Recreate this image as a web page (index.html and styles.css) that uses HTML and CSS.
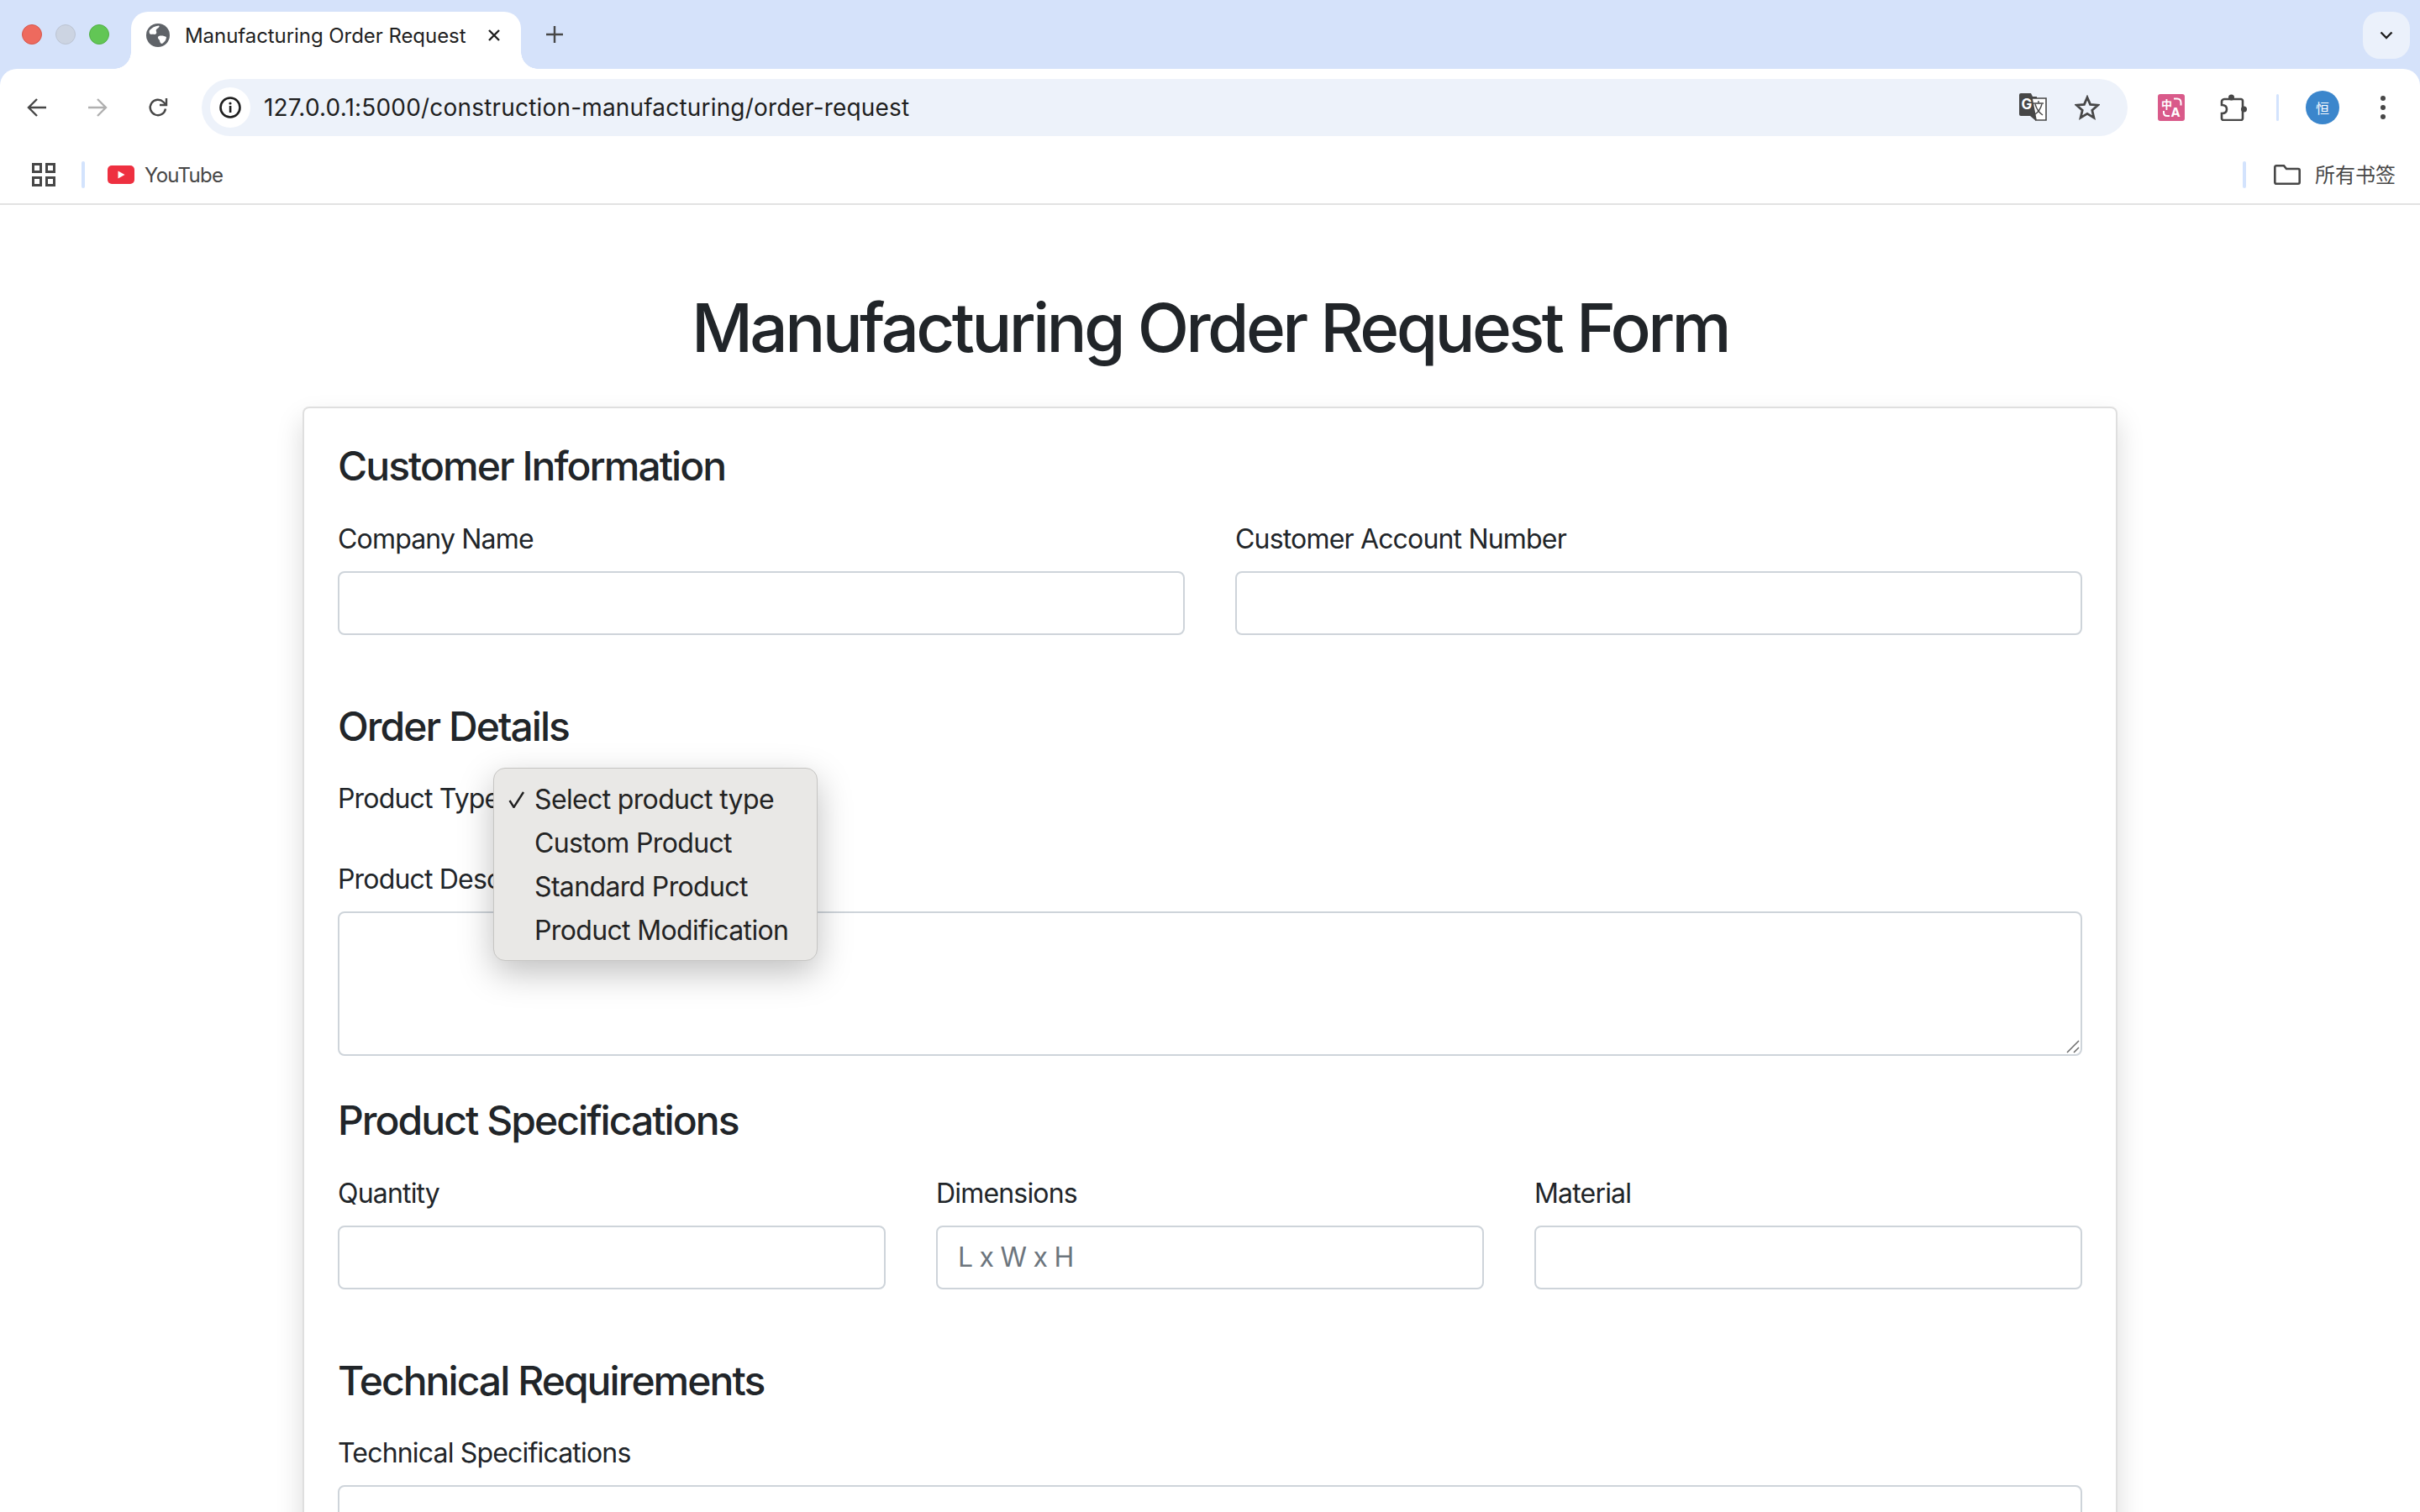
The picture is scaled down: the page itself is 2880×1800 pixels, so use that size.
FILE: index.html
```html
<!DOCTYPE html>
<html lang="en">
<head>
<meta charset="utf-8">
<title>Manufacturing Order Request</title>
<link rel="stylesheet" href="styles.css">
</head>
<body>
<header class="chrome">
  <div class="tabstrip">
    <div class="lights"><span class="light red"></span><span class="light grey"></span><span class="light green"></span></div>
    <div class="tab">
      <svg class="favicon" viewBox="0 0 28 28"><circle cx="14" cy="14" r="14" fill="#5f6368"/><path d="M4 8c3-3 6-5 11-5.500 2 1-1 3-3 4.500-1 2 1 3 0 5-2 2-4 0-6 1C4 13 3 10 4 8zM15 15c3-1 7 0 9 1 0 3-2 6-5 8-2 0-3-2-3-4-2-2-3-4-1-5z" fill="#fff"/></svg>
      <span class="tab-title">Manufacturing Order Request</span>
      <svg class="tab-close" viewBox="0 0 16 16"><path d="M2 2l12 12M14 2L2 14" stroke="#1f1f1f" stroke-width="2.400" fill="none"/></svg>
    </div>
    <svg class="newtab" viewBox="0 0 20 20"><path d="M10 0v20M0 10h20" stroke="#474747" stroke-width="2.400" fill="none"/></svg>
    <div class="tabsearch"><svg viewBox="0 0 16 10" class="chev"><path d="M1.500 1.500L8 8l6.500-6.500" stroke="#1f1f1f" stroke-width="2.400" fill="none"/></svg></div>
  </div>
  <div class="toolbar">
    <div class="navbtn"><svg viewBox="0 0 24 22" class="navicon"><path d="M23 11H2M12 1L2 11l10 10" stroke="#474747" stroke-width="2.400" fill="none"/></svg></div>
    <div class="navbtn"><svg viewBox="0 0 24 22" class="navicon"><path d="M1 11h21M12 1l10 10-10 10" stroke="#b0b0b0" stroke-width="2.400" fill="none"/></svg></div>
    <div class="navbtn"><svg viewBox="0 0 24 24" class="navicon"><path d="M21 13.500A9.200 9.200 0 1 1 18.500 5.500L21 8" stroke="#474747" stroke-width="2.400" fill="none"/><path d="M22 1v8h-8" stroke="#474747" stroke-width="2.400" fill="none"/></svg></div>
    <div class="omnibox">
      <div class="siteinfo"><svg viewBox="0 0 26 26" class="infoicon"><circle cx="13" cy="13" r="11.500" fill="none" stroke="#1f1f1f" stroke-width="2.600"/><rect x="11.800" y="11" width="2.600" height="8" fill="#1f1f1f"/><circle cx="13" cy="8" r="1.600" fill="#1f1f1f"/></svg></div>
      <span class="url">127.0.0.1:5000/construction-manufacturing/order-request</span>
      <svg viewBox="0 0 33 34" class="gt"><path d="M2 0h12l2 4h5v23h-1v6l-7-6H2a2 2 0 0 1-2-2V2a2 2 0 0 1 2-2z" fill="#474747"/><text x="2.500" y="19" class="gt-g">G</text><path d="M15 6h17v26H20z" fill="#fff" stroke="#474747" stroke-width="1.600"/><path d="M17 12h12M23 9v3M19 13c2 7 6 11 9 13M27 13c-2 7-5 10-8 12" stroke="#474747" stroke-width="1.400" fill="none"/></svg>
      <svg viewBox="0 0 30 30" class="star"><path d="M15 3l3.600 8.400 9.100.8-6.900 6 2.100 8.900L15 22.400 7.100 27.100l2.100-8.900-6.900-6 9.100-.8z" fill="none" stroke="#474747" stroke-width="2.800"/></svg>
    </div>
    <svg viewBox="0 0 32 32" class="ext-pink"><rect width="32" height="32" rx="3" fill="#d95a8a"/><text x="4" y="17" class="ext-zh">中</text><text x="15.500" y="26.500" class="ext-a">A</text><path d="M19 5.500h4c3 0 4.500 2 4.500 5v3M7 20v2c0 2.500 1.500 4 4 4h3" fill="none" stroke="#fff" stroke-width="2"/></svg>
    <svg viewBox="0 0 32 32" class="puzzle"><path d="M5 6h20c1 0 2 1 2 2v21c0 1-1 2-2 2H4c-1 0-2-1-2-2v-6c4 0 6-2 6-5s-2-5-6-5V9c0-1 1-3 3-3z" fill="none" stroke="#474747" stroke-width="2.600"/><circle cx="13.500" cy="4" r="3.500" fill="#474747"/><circle cx="28.500" cy="18" r="3.500" fill="#474747"/></svg>
    <span class="tsep"></span>
    <div class="avatar">恒</div>
    <svg viewBox="0 0 24 30" class="dots"><circle cx="12" cy="4" r="3" fill="#474747"/><circle cx="12" cy="15" r="3" fill="#474747"/><circle cx="12" cy="26" r="3" fill="#474747"/></svg>
  </div>
  <div class="bookmarks">
    <svg viewBox="0 0 28 28" class="apps"><path d="M1.500 1.500h9v9h-9zM17.500 1.500h9v9h-9zM1.500 17.500h9v9h-9zM17.500 17.500h9v9h-9z" fill="none" stroke="#474747" stroke-width="3"/></svg>
    <span class="bsep"></span>
    <svg viewBox="0 0 32 22" class="yt"><rect width="32" height="22" rx="5" fill="#ee3040"/><path d="M12.500 6.500l8 4.500-8 4.500z" fill="#fff"/></svg>
    <span class="yt-label">YouTube</span>
    <span class="bsep bsep-right"></span>
    <svg viewBox="0 0 32 24" class="folder"><path d="M1.300 3c0-1 .8-1.700 1.700-1.700h9l3 3.700h14c1 0 1.700.7 1.700 1.700V21c0 1-.7 1.700-1.700 1.700H3c-1 0-1.700-.7-1.700-1.700z" fill="none" stroke="#474747" stroke-width="2.600"/></svg>
    <span class="all-label">所有书签</span>
  </div>
</header>

<main class="page">
  <h1 class="title">Manufacturing Order Request Form</h1>
  <form class="card">
    <section class="section">
      <h4 class="heading">Customer Information</h4>
      <div class="row row-2">
        <div class="field"><label class="label">Company Name</label><input class="control" type="text"></div>
        <div class="field"><label class="label">Customer Account Number</label><input class="control" type="text"></div>
      </div>
    </section>
    <section class="section section-tight">
      <h4 class="heading">Order Details</h4>
      <div class="field field-select">
        <label class="label">Product Type</label>
        <div class="popup">
          <div class="opt"><svg viewBox="0 0 20 20" class="check"><path d="M1.500 11l5 8L18 1" fill="none" stroke="#212121" stroke-width="2.400"/></svg><span>Select product type</span></div>
          <div class="opt"><span class="nocheck"></span><span>Custom Product</span></div>
          <div class="opt"><span class="nocheck"></span><span>Standard Product</span></div>
          <div class="opt"><span class="nocheck"></span><span>Product Modification</span></div>
        </div>
      </div>
      <div class="field field-last">
        <label class="label">Product Description</label>
        <div class="area-wrap">
          <textarea class="control area"></textarea>
          <svg viewBox="0 0 16 16" class="grip"><path d="M1 15L15 1M9 15l6-6" stroke="#6b6b6b" stroke-width="1.500" fill="none"/></svg>
        </div>
      </div>
    </section>
    <section class="section">
      <h4 class="heading">Product Specifications</h4>
      <div class="row row-3">
        <div class="field"><label class="label">Quantity</label><input class="control" type="text"></div>
        <div class="field"><label class="label">Dimensions</label><input class="control" type="text" placeholder="L x W x H"></div>
        <div class="field"><label class="label">Material</label><input class="control" type="text"></div>
      </div>
    </section>
    <section class="section">
      <h4 class="heading">Technical Requirements</h4>
      <div class="field"><label class="label">Technical Specifications</label><textarea class="control area"></textarea></div>
    </section>
  </form>
</main>
</body>
</html>
```
FILE: styles.css
```css
* { box-sizing: border-box; }
html, body { margin: 0; height: 1800px; overflow: hidden; background: #fff; }
body { font-family: Inter, "Noto Sans CJK SC", sans-serif; color: #212529; }

.chrome { background: #d5e2fa; }
.tabstrip { height: 82px; display: flex; align-items: flex-start; padding-left: 26px; }
.lights { display: flex; gap: 16px; margin-top: 29px; }
.light { width: 24px; height: 24px; border-radius: 50%; }
.red { background: #ee6a5e; border: 1px solid #d5574c; }
.grey { background: #ccd4e2; border: 1px solid #bcc4d2; }
.green { background: #62c655; border: 1px solid #52b045; }

.tab { position: relative; margin-left: 26px; margin-top: 14px; width: 464px; height: 68px; background: #fff; border-radius: 20px 20px 0 0; display: flex; align-items: center; padding: 0 0 12px 18px; }
.tab::before, .tab::after { content: ""; position: absolute; bottom: 0; width: 20px; height: 20px; }
.tab::before { left: -20px; background: radial-gradient(circle at 0 0, transparent 19.500px, #fff 20px); }
.tab::after { right: -20px; background: radial-gradient(circle at 100% 0, transparent 19.500px, #fff 20px); }
.favicon { width: 28px; height: 28px; flex: none; }
.tab-title { margin-left: 18px; font-size: 24px; letter-spacing: -.06px; color: #1f1f1f; white-space: nowrap; width: 340px; }
.tab-close { width: 16px; height: 16px; margin-left: 20px; }
.newtab { width: 20px; height: 20px; margin: 31px 0 0 30px; }
.tabsearch { margin: 14px 12px 0 auto; width: 56px; height: 56px; border-radius: 20px; background: #ebf1fb; display: flex; align-items: center; justify-content: center; }
.chev { width: 16px; height: 10px; }

.toolbar { height: 92px; background: #fff; border-radius: 20px 20px 0 0; display: flex; align-items: center; padding-left: 8px; position: relative; }
.navbtn { width: 72px; display: flex; justify-content: center; }
.navicon { width: 24px; height: 24px; }
.omnibox { margin-left: 16px; width: 2292px; height: 68px; border-radius: 34px; background: #edf2fa; display: flex; align-items: center; padding: 0 33px 0 10px; }
.siteinfo { width: 48px; height: 48px; border-radius: 50%; background: #fff; display: flex; align-items: center; justify-content: center; flex: none; }
.infoicon { width: 26px; height: 26px; }
.url { margin-left: 16px; font-size: 28px; letter-spacing: .18px; color: #1f1f1f; white-space: nowrap; flex: 1; }
.gt { width: 33px; height: 34px; flex: none; }
.gt-g { font: 700 17px Inter, sans-serif; fill: #fff; }
.star { width: 30px; height: 30px; margin-left: 33px; flex: none; }
.ext-pink { margin-left: 36px; width: 32px; height: 32px; flex: none; }
.ext-zh { font: 700 13px "Noto Sans CJK SC", sans-serif; fill: #fff; }
.ext-a { font: 700 15px Inter, sans-serif; fill: #fff; }
.puzzle { width: 32px; height: 32px; margin-left: 42px; flex: none; }
.tsep { width: 3px; height: 32px; margin-left: 35px; background: #d3e3fd; border-radius: 2px; flex: none; }
.avatar { width: 40px; height: 40px; margin-left: 32px; border-radius: 50%; background: #3b86cc; color: #fff; font-size: 16px; display: flex; align-items: center; justify-content: center; flex: none; }
.dots { width: 24px; height: 30px; margin-left: 40px; flex: none; }

.bookmarks { height: 70px; background: #fff; border-bottom: 2px solid #e2e2e2; display: flex; align-items: center; padding: 0 29px 0 38px; }
.apps { width: 28px; height: 28px; flex: none; }
.bsep { width: 4px; height: 32px; background: #d3e3fd; border-radius: 2px; margin-left: 31px; flex: none; }
.yt { width: 32px; height: 22px; margin-left: 27px; flex: none; }
.yt-label { margin-left: 12px; font-size: 24px; letter-spacing: -.75px; color: #474747; }
.bsep-right { margin-left: auto; }
.folder { width: 32px; height: 24px; margin-left: 33px; flex: none; }
.all-label { margin-left: 17px; margin-bottom: 3px; font-size: 24px; color: #474747; font-family: "Noto Sans CJK SC", sans-serif; }

.page { padding-top: 98px; }
.title { margin: 0 0 46px; font-size: 80px; font-weight: 500; line-height: 96px; letter-spacing: -3.650px; text-align: center; }
.card { width: 2160px; margin: 0 auto; padding: 40px; background: #fff; border: 2px solid rgba(0,0,0,.125); border-radius: 8px; box-shadow: 0 16px 32px rgba(0,0,0,.15); }
.section { margin-bottom: 48px; }
.heading { margin: 0 0 32px; font-size: 48px; font-weight: 500; line-height: 57.600px; letter-spacing: -1.950px; }
.row { display: grid; gap: 60px; }
.row-2 { grid-template-columns: 1fr 1fr; }
.row-3 { grid-template-columns: 1fr 1fr 1fr; }
.field { margin-bottom: 32px; }
.field-last { margin-bottom: 0; }
.field-select { position: relative; padding-bottom: 16px; }
.label { display: block; padding-top: 2px; margin-bottom: 14px; font-size: 32px; line-height: 48px; letter-spacing: -.82px; }
.field-select .label { margin-bottom: -2px; }
.control { display: block; width: 100%; height: 76px; padding: 12px 24px; font: 32px/48px Inter, sans-serif; letter-spacing: -.75px; color: #212529; background: #fff; border: 2px solid #ced4da; border-radius: 8px; outline: none; }
.control::placeholder { color: #6c757d; opacity: 1; }
.area { height: 172px; resize: none; }
.area-wrap { position: relative; }
.grip { position: absolute; right: 3px; bottom: 3px; width: 16px; height: 16px; }

.popup { position: absolute; left: 185px; top: -11px; width: 386px; height: 230px; padding: 10px 0; background: #e9e8e6; border: 1px solid #c6c5c3; border-radius: 14px; box-shadow: 0 14px 40px rgba(0,0,0,.25); z-index: 5; }
.opt { height: 52px; display: flex; align-items: center; padding-left: 17px; font-size: 32px; letter-spacing: -.65px; color: #232323; white-space: nowrap; }
.check { width: 20px; height: 20px; margin-right: 11px; margin-top: 2px; flex: none; }
.nocheck { width: 20px; margin-right: 11px; flex: none; }
```
